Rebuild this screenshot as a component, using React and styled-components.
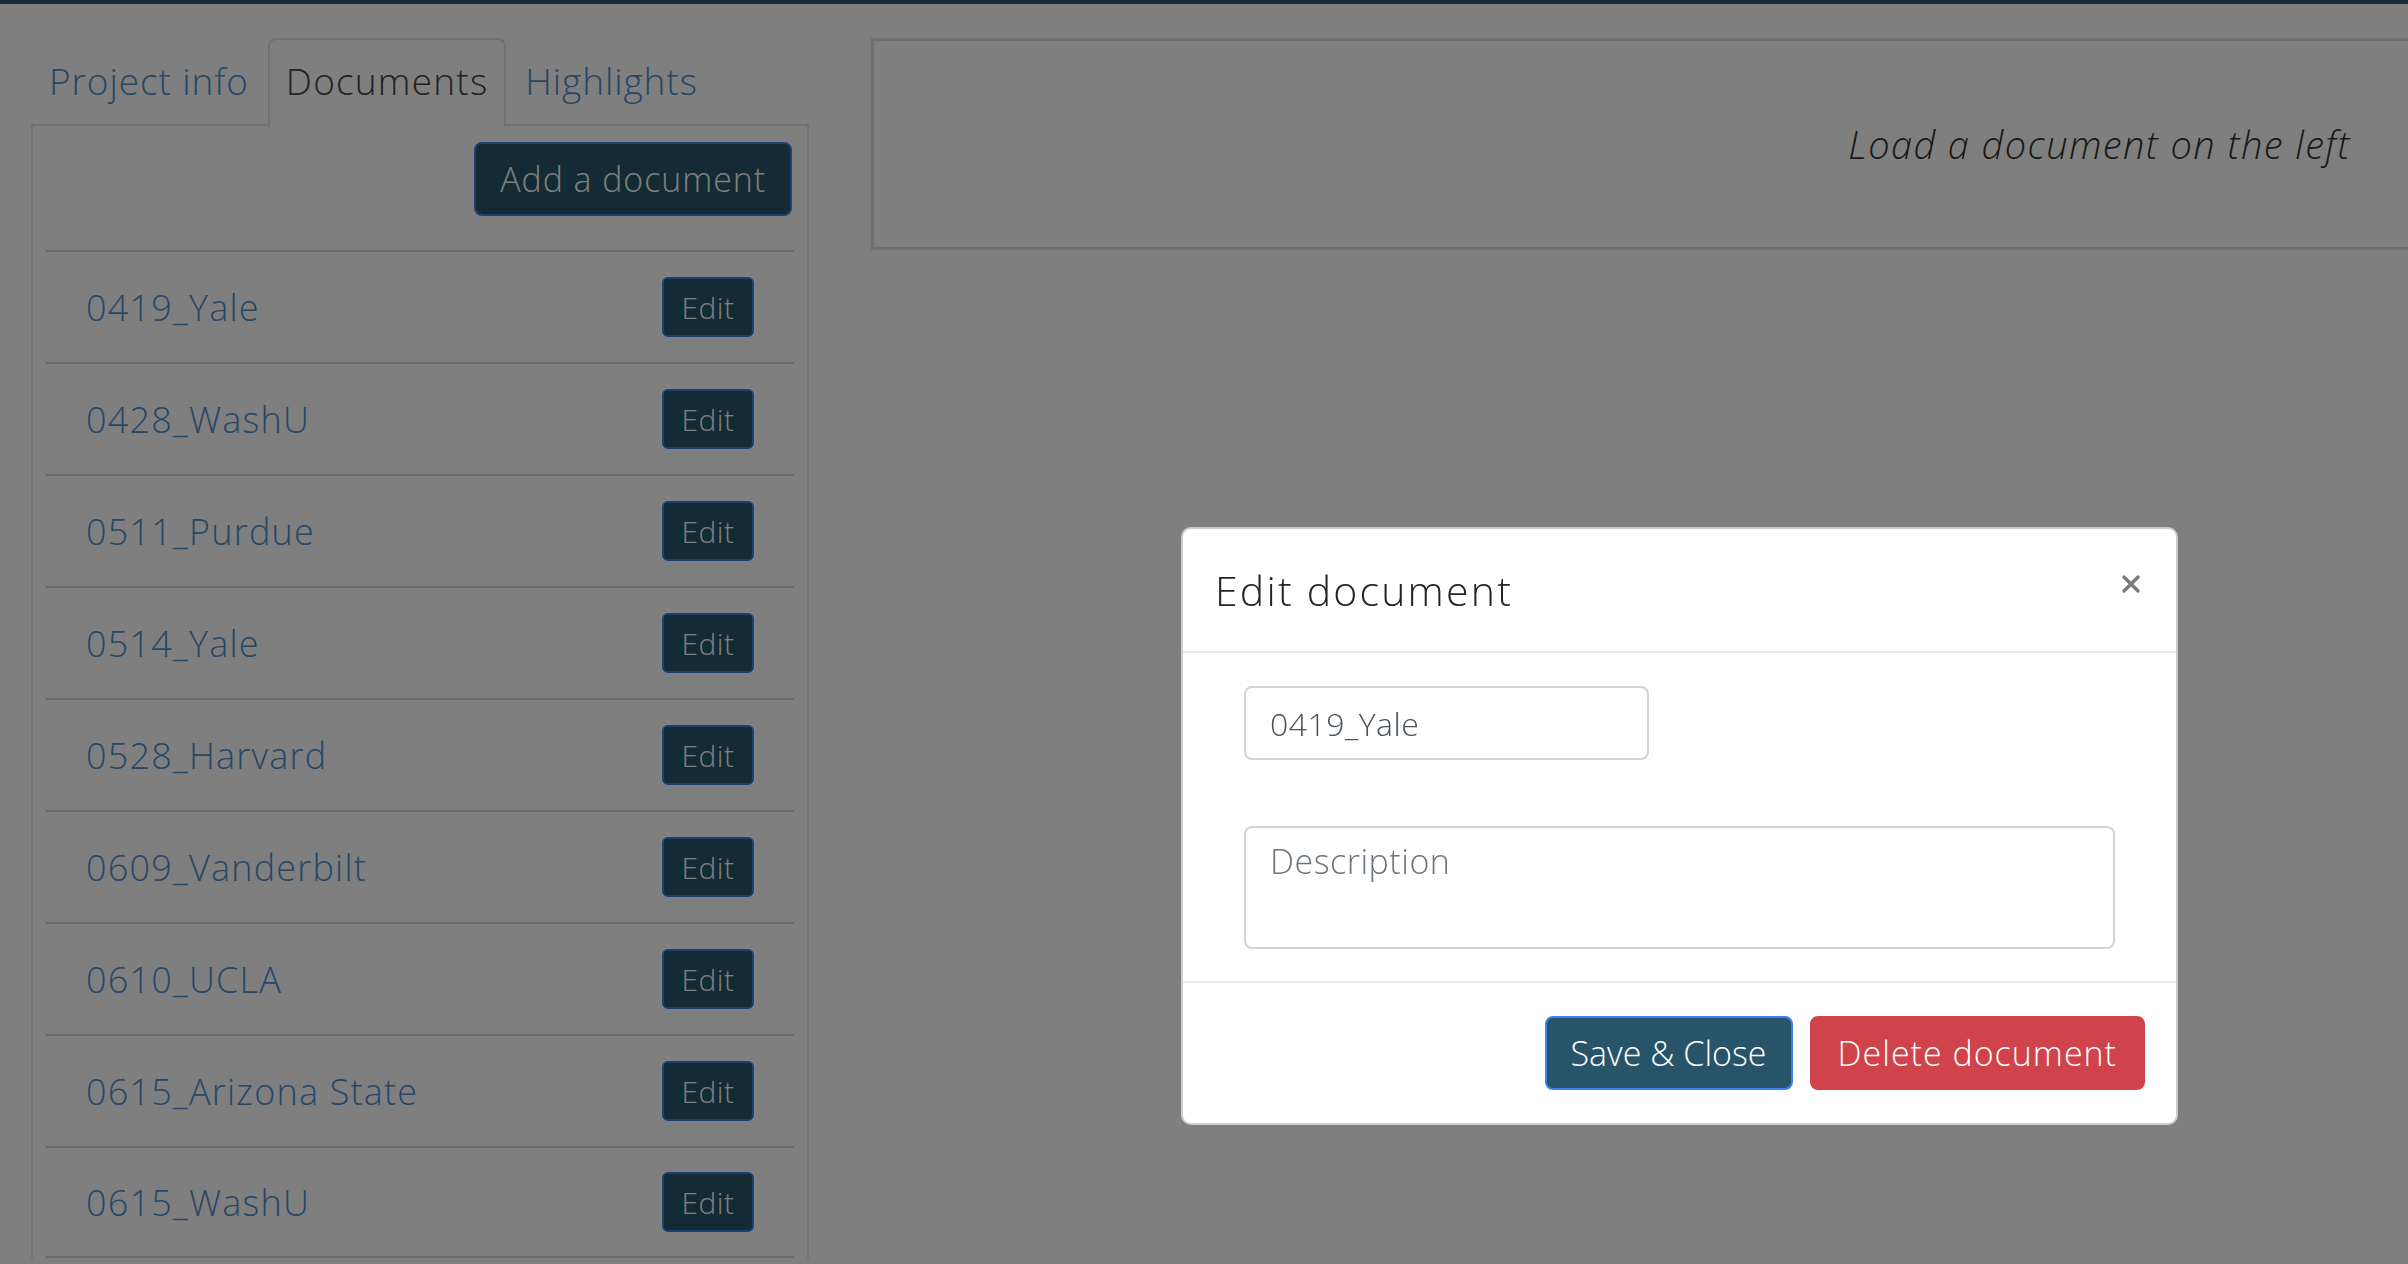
import React from 'react';
import styled, { createGlobalStyle } from 'styled-components';

const documents = [
  '0419_Yale',
  '0428_WashU',
  '0511_Purdue',
  '0514_Yale',
  '0528_Harvard',
  '0609_Vanderbilt',
  '0610_UCLA',
  '0615_Arizona State',
  '0615_WashU',
];

const tabs = ['Project info', 'Documents', 'Highlights'];

const GlobalStyle = createGlobalStyle`
  html, body {
    margin: 0;
    background: #fff;
    height: 100%;
    overflow: hidden;
  }
  body {
    font-family: 'Open Sans', 'Liberation Sans', sans-serif;
    font-weight: 300;
    color: #212529;
  }
  * {
    box-sizing: border-box;
  }
`;

const App = () => (
  <>
    <GlobalStyle />
    <TopBar />
    <Page>
      <LeftColumn>
        <TabNav>
          {tabs.map((tab) => (
            <Tab key={tab} active={tab === 'Documents'}>
              {tab}
            </Tab>
          ))}
        </TabNav>
        <TabPane>
          <AddRow>
            <PrimaryButton>Add a document</PrimaryButton>
          </AddRow>
          {documents.map((doc) => (
            <DocRow key={doc}>
              <DocLink>{doc}</DocLink>
              <EditButton>Edit</EditButton>
            </DocRow>
          ))}
        </TabPane>
      </LeftColumn>
      <Viewer>
        <Hint>Load a document on the left</Hint>
      </Viewer>
    </Page>

    <Backdrop>
      <Dialog>
        <Header>
          <Title>Edit document</Title>
          <Close aria-label='close'>
            <svg width='18' height='18' viewBox='0 0 18 18'>
              <path d='M2 2 L16 16 M16 2 L2 16' stroke='#7a7a7a' strokeWidth='3.4' strokeLinecap='round' />
            </svg>
          </Close>
        </Header>
        <Body>
          <NameInput defaultValue='0419_Yale' />
          <Description placeholder='Description' />
        </Body>
        <Footer>
          <FooterButton>Save &amp; Close</FooterButton>
          <FooterButton danger>Delete document</FooterButton>
        </Footer>
      </Dialog>
    </Backdrop>
  </>
);

export default App;

const TopBar = styled.div`
  height: 4px;
  background: #33546f;
`;

const Page = styled.div`
  display: flex;
  align-items: flex-start;
  padding: 34px 0 0 31px;
  width: calc(100% + 40px);
`;

const LeftColumn = styled.div`
  width: 778px;
  flex-shrink: 0;
`;

const TabNav = styled.div`
  display: flex;
  border-bottom: 2px solid #dee2e6;
  height: 88px;
`;

const Tab = styled.div`
  padding: 0 16px 5px;
  margin-right: 1px;
  height: 90px;
  display: flex;
  align-items: center;
  font-size: 37px;
  letter-spacing: ${({ active }) => (active ? 1.2 : 0.9)}px;
  color: ${({ active }) => (active ? '#444' : '#4d8fcc')};
  border: 2px solid ${({ active }) => (active ? '#dee2e6' : 'transparent')};
  border-bottom-color: ${({ active }) => (active ? '#fff' : 'transparent')};
  border-radius: 8px 8px 0 0;
  background: ${({ active }) => (active ? '#fff' : 'transparent')};
`;

const TabPane = styled.div`
  border-left: 2px solid #dee2e6;
  border-right: 2px solid #dee2e6;
  padding: 16px 13px 0;
`;

const AddRow = styled.div`
  display: flex;
  justify-content: flex-end;
  padding: 0 2px 34px 0;
`;

const PrimaryButton = styled.button`
  height: 74px;
  padding: 0 24px;
  font-family: inherit;
  font-weight: 300;
  font-size: 34px;
  letter-spacing: 0.9px;
  color: #fff;
  background: #285469;
  border: 2px solid #3b7ee6;
  border-radius: 8px;
`;

const DocRow = styled.div`
  display: flex;
  align-items: center;
  justify-content: space-between;
  height: 112px;
  padding: 0 40px;
  border-top: 2px solid #d4d4d4;

  &:last-child {
    border-bottom: 2px solid #d4d4d4;
  }
`;

const DocLink = styled.span`
  font-size: 36px;
  letter-spacing: 1.2px;
  color: #4d8fcc;
`;

const EditButton = styled.button`
  width: 92px;
  height: 60px;
  padding: 0;
  font-family: inherit;
  font-weight: 300;
  font-size: 30px;
  letter-spacing: 0.5px;
  color: #fff;
  background: #285469;
  border: 2px solid #3b7ee6;
  border-radius: 6px;
`;

const Viewer = styled.div`
  flex: 1;
  margin-left: 62px;
  height: 212px;
  border: 3px solid #dedede;
  display: flex;
  align-items: center;
  justify-content: flex-end;
  padding-right: 94px;
`;

const Hint = styled.em`
  font-size: 38px;
  font-weight: 300;
  letter-spacing: 1.4px;
  color: #333;
`;

const Backdrop = styled.div`
  position: fixed;
  inset: 0;
  background: rgba(0, 0, 0, 0.5);
  padding: 527px 0 0 1181px;
`;

const Dialog = styled.div`
  width: 997px;
  background: #fff;
  border: 2px solid rgba(0, 0, 0, 0.2);
  border-radius: 10px;
`;

const Header = styled.div`
  display: flex;
  align-items: center;
  justify-content: space-between;
  height: 124px;
  padding: 0 36px 0 32px;
  border-bottom: 2px solid #e6e8eb;
`;

const Title = styled.h5`
  margin: 0;
  font-size: 41px;
  font-weight: 300;
  letter-spacing: 2.2px;
  color: #212529;
`;

const Close = styled.span`
  display: flex;
  margin-top: -12px;
`;

const Body = styled.div`
  display: flex;
  flex-direction: column;
  align-items: flex-start;
  gap: 66px;
  padding: 33px 61px 32px;
`;

const fieldStyles = `
  font-family: inherit;
  font-weight: 300;
  color: #495057;
  background: #fff;
  border: 2px solid #ced4da;
  border-radius: 8px;
  padding: 0 24px;
  outline: none;
`;

const NameInput = styled.input`
  ${fieldStyles}
  width: 405px;
  height: 74px;
  font-size: 32px;
  letter-spacing: 0.5px;
`;

const Description = styled.textarea`
  ${fieldStyles}
  width: 100%;
  height: 123px;
  padding-top: 10px;
  font-size: 34px;
  letter-spacing: 0.5px;
  resize: none;

  &::placeholder {
    color: #6c757d;
  }
`;

const Footer = styled.div`
  display: flex;
  justify-content: flex-end;
  gap: 17px;
  padding: 33px 31px 33px;
  border-top: 2px solid #e9ecef;
`;

const FooterButton = styled.button`
  height: 74px;
  padding: 0 ${({ danger }) => (danger ? 26 : 24)}px;
  font-family: inherit;
  font-weight: 300;
  font-size: 34px;
  letter-spacing: ${({ danger }) => (danger ? 1 : 0)}px;
  color: #fff;
  background: ${({ danger }) => (danger ? '#d0434b' : '#285469')};
  border: 2px solid ${({ danger }) => (danger ? '#d0434b' : '#3b82f0')};
  border-radius: 8px;
`;
